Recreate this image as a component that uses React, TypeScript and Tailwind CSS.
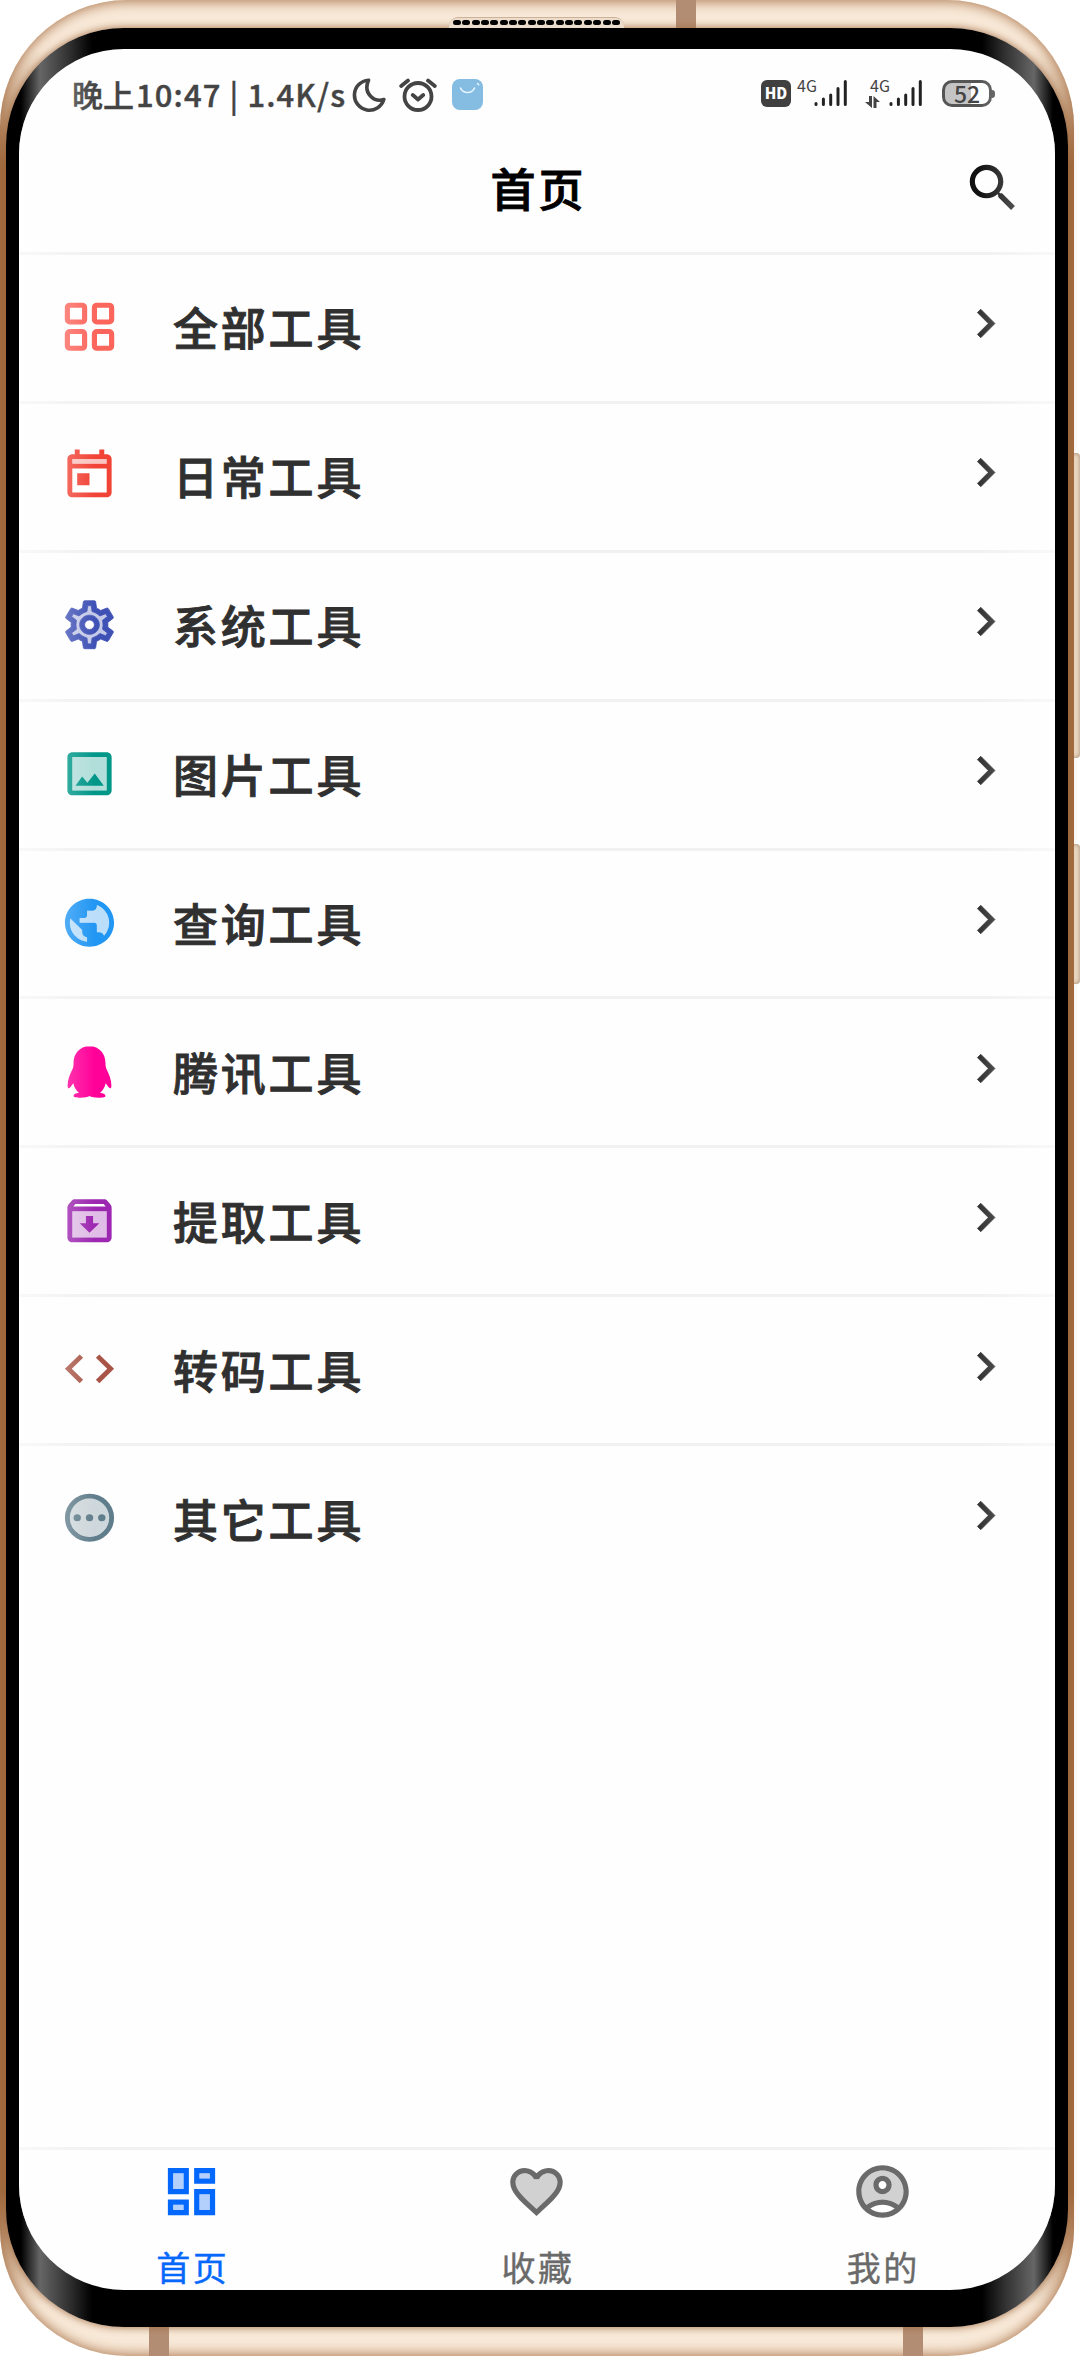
import type { ReactNode } from "react";
import clsx from "clsx";

type Tool = {
  label: string;
  color: string;
  icon: ReactNode;
};

const tools: Tool[] = [
  {
    label: "全部工具",
    color: "text-[#fb655c]",
    icon: (
      <g fill="none" stroke="currentColor" strokeWidth="2.1">
        <rect x="3" y="3" width="7" height="7" rx="1" />
        <rect x="14" y="3" width="7" height="7" rx="1" />
        <rect x="3" y="14" width="7" height="7" rx="1" />
        <rect x="14" y="14" width="7" height="7" rx="1" />
      </g>
    ),
  },
  {
    label: "日常工具",
    color: "text-[#f14336]",
    icon: (
      <>
        <path opacity=".3" d="M5 5h14v2H5z" />
        <path d="M19 3h-1V1h-2v2H8V1H6v2H5c-1.1 0-2 .9-2 2v14c0 1.1.9 2 2 2h14c1.1 0 2-.9 2-2V5c0-1.1-.9-2-2-2zm0 16H5V9h14v10zm0-12H5V5h14v2zM7 11h5v5H7z" />
      </>
    ),
  },
  {
    label: "系统工具",
    color: "text-[#3f51b5]",
    icon: (
      <>
        <path
          opacity=".3"
          d="M19.28 8.6l-.7-1.21-1.27.51-1.06.43-.91-.7c-.39-.3-.8-.54-1.23-.71l-1.06-.43-.16-1.13L12.7 4h-1.4l-.19 1.35-.16 1.13-1.06.44c-.41.17-.82.41-1.25.73l-.9.68-1.05-.42-1.27-.52-.7 1.21 1.08.84.89.7-.14 1.13c-.03.3-.05.53-.05.73s.02.43.05.73l.14 1.13-.89.7-1.08.84.7 1.21 1.27-.51 1.06-.43.91.7c.39.3.8.54 1.23.71l1.06.43.16 1.13.19 1.36h1.39l.19-1.35.16-1.13 1.06-.43c.41-.17.82-.41 1.25-.73l.9-.68 1.04.42 1.27.51.7-1.21-1.08-.84-.89-.7.14-1.13c.04-.31.05-.52.05-.73 0-.21-.02-.43-.05-.73l-.14-1.13.89-.7 1.1-.84zM12 16c-2.21 0-4-1.79-4-4s1.79-4 4-4 4 1.79 4 4-1.79 4-4 4z"
        />
        <path
          stroke="currentColor"
          strokeWidth=".35"
          d="M19.43 12.98c.04-.32.07-.64.07-.98s-.03-.66-.07-.98l2.11-1.65c.19-.15.24-.42.12-.64l-2-3.46c-.09-.16-.26-.25-.44-.25-.06 0-.12.01-.17.03l-2.49 1c-.52-.4-1.08-.73-1.69-.98l-.38-2.65C14.46 2.18 14.25 2 14 2h-4c-.25 0-.46.18-.49.42l-.38 2.65c-.61.25-1.17.59-1.69.98l-2.49-1c-.06-.02-.12-.03-.18-.03-.17 0-.34.09-.43.25l-2 3.46c-.13.22-.07.49.12.64l2.11 1.65c-.04.32-.07.65-.07.98s.03.66.07.98l-2.11 1.65c-.19.15-.24.42-.12.64l2 3.46c.09.16.26.25.44.25.06 0 .12-.01.17-.03l2.49-1c.52.4 1.08.73 1.69.98l.38 2.65c.03.24.24.42.49.42h4c.25 0 .46-.18.49-.42l.38-2.65c.61-.25 1.17-.59 1.69-.98l2.49 1c.06.02.12.03.18.03.17 0 .34-.09.43-.25l2-3.46c.12-.22.07-.49-.12-.64l-2.11-1.65zm-1.98-1.71c.04.31.05.52.05.73 0 .21-.02.43-.05.73l-.14 1.13.89.7 1.08.84-.7 1.21-1.27-.51-1.04-.42-.9.68c-.43.32-.84.56-1.25.73l-1.06.43-.16 1.13-.2 1.35h-1.4l-.19-1.35-.16-1.13-1.06-.43c-.43-.18-.83-.41-1.23-.71l-.91-.7-1.06.43-1.27.51-.7-1.21 1.08-.84.89-.7-.14-1.13c-.03-.31-.05-.54-.05-.74s.02-.43.05-.73l.14-1.13-.89-.7-1.08-.84.7-1.21 1.27.51 1.04.42.9-.68c.43-.32.84-.56 1.25-.73l1.06-.43.16-1.13.2-1.35h1.39l.19 1.35.16 1.13 1.06.43c.43.18.83.41 1.23.71l.91.7 1.06-.43 1.27-.51.7 1.21-1.07.85-.89.7.14 1.13zM12 8c-2.21 0-4 1.79-4 4s1.79 4 4 4 4-1.79 4-4-1.79-4-4-4zm0 6c-1.1 0-2-.9-2-2s.9-2 2-2 2 .9 2 2-.9 2-2 2z"
        />
      </>
    ),
  },
  {
    label: "图片工具",
    color: "text-[#009688]",
    icon: (
      <>
        <path opacity=".3" d="M5 5h14v14H5z" />
        <path d="M19 3H5c-1.1 0-2 .9-2 2v14c0 1.1.9 2 2 2h14c1.1 0 2-.9 2-2V5c0-1.1-.9-2-2-2zm0 16H5V5h14v14zM14.14 11.86l-3 3.87L9 13.14 6.3 17h11.5z" />
      </>
    ),
  },
  {
    label: "查询工具",
    color: "text-[#2196f3]",
    icon: (
      <>
        <path
          opacity=".3"
          d="M14.99 4.59V5c0 1.1-.9 2-2 2h-2v2c0 .55-.45 1-1 1h-2v2h6c.55 0 1 .45 1 1v3h1c.89 0 1.64.59 1.9 1.4C19.19 15.98 20 14.08 20 12c0-3.35-2.08-6.23-5.01-7.41zM8.99 16v-1l-4.78-4.78C4.08 10.79 4 11.39 4 12c0 4.07 3.06 7.43 6.99 7.93V18c-1.1 0-2-.9-2-2z"
        />
        <path d="M12 2C6.48 2 2 6.48 2 12s4.48 10 10 10 10-4.48 10-10S17.52 2 12 2zm-1 17.93c-3.95-.49-7-3.85-7-7.93 0-.62.08-1.22.21-1.79L9 15v1c0 1.1.9 2 2 2v1.93zm6.9-2.54c-.26-.81-1-1.39-1.9-1.39h-1v-3c0-.55-.45-1-1-1H8v-2h2c.55 0 1-.45 1-1V7h2c1.1 0 2-.9 2-2v-.41C17.93 5.77 20 8.65 20 12c0 2.08-.81 3.98-2.1 5.39z" />
      </>
    ),
  },
  {
    label: "腾讯工具",
    color: "text-[#ff0099]",
    icon: (
      <path d="M12 1.4c-4.1 0-6.5 3.2-6.5 7 0 1-.1 1.9-.5 2.7-1.1 2.3-1.9 4.500-1.9 6.600 0 .9.2 1.300.5 1.200.4-.1 1.100-1 1.800-2.100.4 1.700 1.200 3 2.300 4-1.200.2-2.200.6-2.200 1.300 0 .5.9.7 2.900.7 1.600 0 2.900-.2 3.600-.7.700.5 2 .7 3.600.7 2 0 2.900-.2 2.900-.7 0-.7-1-1.100-2.200-1.300 1.100-1 1.900-2.300 2.300-4 .7 1.100 1.400 2 1.800 2.100.3.100.5-.3.500-1.200 0-2.100-.8-4.300-1.900-6.600-.4-.8-.5-1.700-.5-2.700 0-3.800-2.400-7-6.500-7z" />
    ),
  },
  {
    label: "提取工具",
    color: "text-[#9c27b0]",
    icon: (
      <>
        <path opacity=".3" d="M5 8h14v11H5z" />
        <path d="M20.54 5.23l-1.39-1.68C18.88 3.21 18.47 3 18 3H6c-.47 0-.88.21-1.16.55L3.46 5.23C3.17 5.57 3 6.02 3 6.5V19c0 1.1.9 2 2 2h14c1.1 0 2-.9 2-2V6.5c0-.48-.17-.93-.46-1.27zM6.24 5h11.52l.83 1H5.42l.82-1zM5 19V8h14v11H5zm8.45-9h-2.9v3H8l4 4 4-4h-2.55z" />
      </>
    ),
  },
  {
    label: "转码工具",
    color: "text-[#a85547]",
    icon: (
      <path d="M9.4 16.6L4.8 12l4.6-4.6L8 6l-6 6 6 6 1.4-1.4zm5.2 0l4.6-4.6-4.6-4.6L16 6l6 6-6 6-1.4-1.4z" />
    ),
  },
  {
    label: "其它工具",
    color: "text-[#607d8b]",
    icon: (
      <>
        <circle cx="12" cy="12" r="8" opacity=".3" />
        <circle cx="12" cy="12" r="9" fill="none" stroke="currentColor" strokeWidth="2" />
        <circle cx="7" cy="12" r="1.5" />
        <circle cx="12" cy="12" r="1.5" />
        <circle cx="17" cy="12" r="1.5" />
      </>
    ),
  },
];

const tabs = [
  {
    label: "首页",
    active: true,
    icon: (
      <>
        <path opacity=".3" d="M5 5h4v6H5zM15 13h4v6h-4zM5 17h4v2H5zM15 5h4v2h-4z" />
        <path d="M3 13h8V3H3v10zm2-8h4v6H5V5zm8 16h8V11h-8v10zm2-8h4v6h-4v-6zM13 3v6h8V3h-8zm6 4h-4V5h4v2zM3 21h8v-6H3v6zm2-4h4v2H5v-2z" />
      </>
    ),
  },
  {
    label: "收藏",
    active: false,
    icon: (
      <>
        <path
          opacity=".3"
          d="M16.5 5c-1.54 0-3.04.99-3.56 2.36h-1.87C10.54 5.99 9.04 5 7.5 5 5.5 5 4 6.5 4 8.5c0 2.89 3.14 5.74 7.9 10.05l.1.1.1-.1C16.86 14.24 20 11.39 20 8.5c0-2-1.5-3.5-3.5-3.5z"
        />
        <path d="M16.5 3c-1.74 0-3.41.81-4.5 2.09C10.91 3.81 9.24 3 7.5 3 4.42 3 2 5.42 2 8.5c0 3.78 3.4 6.86 8.55 11.54L12 21.35l1.45-1.32C18.6 15.36 22 12.28 22 8.5 22 5.42 19.58 3 16.5 3zm-4.4 15.55l-.1.1-.1-.1C7.14 14.24 4 11.39 4 8.5 4 6.5 5.5 5 7.5 5c1.54 0 3.04.99 3.57 2.36h1.87C13.46 5.99 14.96 5 16.5 5c2 0 3.5 1.5 3.5 3.5 0 2.89-3.14 5.74-7.9 10.05z" />
      </>
    ),
  },
  {
    label: "我的",
    active: false,
    icon: (
      <>
        <path
          opacity=".3"
          d="M12 4c-4.42 0-8 3.58-8 8 0 1.95.7 3.73 1.86 5.12C7.55 15.8 9.68 15 12 15s4.45.8 6.14 2.12C19.3 15.73 20 13.95 20 12c0-4.42-3.58-8-8-8zm0 9c-1.93 0-3.5-1.57-3.5-3.5S10.07 6 12 6s3.5 1.57 3.5 3.5S13.93 13 12 13z"
        />
        <path d="M12 2C6.48 2 2 6.48 2 12s4.48 10 10 10 10-4.48 10-10S17.52 2 12 2zM7.35 18.5C8.66 17.56 10.26 17 12 17s3.34.56 4.65 1.5C15.34 19.44 13.74 20 12 20s-3.34-.56-4.65-1.5zm10.79-1.38C16.45 15.8 14.32 15 12 15s-4.45.8-6.14 2.12C4.7 15.73 4 13.95 4 12c0-4.42 3.58-8 8-8s8 3.58 8 8c0 1.95-.7 3.73-1.86 5.12zM12 6c-1.93 0-3.5 1.57-3.5 3.5S10.07 13 12 13s3.5-1.57 3.5-3.5S13.93 6 12 6zm0 5c-.83 0-1.5-.67-1.5-1.5S11.17 8 12 8s1.5.67 1.5 1.5S12.83 11 12 11z" />
      </>
    ),
  },
];

function Signal() {
  return (
    <svg viewBox="0 0 34 28" className="h-7 w-[34px]" stroke="#222" strokeWidth="3" strokeLinecap="round">
      <path d="M2 24.5v1M9.4 20v5.5M16.7 16v9.5M24 9.5v16M31.3 2.5v23" />
    </svg>
  );
}

function StatusBar() {
  return (
    <div className="flex h-[91px] items-center pr-[60px] pl-[53px] text-[#444]">
      <div className="mb-[3px] flex w-[280px] text-[31px] leading-none font-medium whitespace-nowrap [-webkit-text-stroke:0.4px]">
        <span>晚上</span>
        <span className="ml-[2px] tracking-[1.1px]">10:47 | 1.4K/s</span>
      </div>
      <svg viewBox="0 0 34 34" className="h-[34px] w-[34px]" fill="none" stroke="currentColor" strokeWidth="3.6" strokeLinejoin="round">
        <path d="M16.5 2.2A15 15 0 1 0 31.8 21.5C23 24.5 10.5 16 16.5 2.2z" />
      </svg>
      <svg viewBox="0 0 38 34" className="ml-[13px] h-[34px] w-[38px]" fill="none" stroke="currentColor" strokeWidth="3.8" strokeLinecap="round" strokeLinejoin="round">
        <circle cx="19" cy="18.5" r="13.5" />
        <path d="M13.800 17l5.200 4.500 5.200-4.500M2.200 8l6.800-5.400M35.800 8L29 2.600" />
      </svg>
      <svg viewBox="0 0 31 31" className="ml-[15px] h-[31px] w-[31px]" fill="none">
        <rect width="31" height="31" rx="8" fill="#84bce2" />
        <path d="M8.500 9c2.500 6 11.500 6 14 0M25.500 4.500l1.200 1.200" stroke="#e9f5fc" strokeWidth="1.6" strokeLinecap="round" />
      </svg>

      <div className="mb-[2px] ml-auto flex items-center">
        <div className="flex h-[27px] w-[30px] items-center justify-center rounded-[6px] bg-[#404040] text-[15px] font-black text-white">
          HD
        </div>
        <div className="flex h-[30px] items-start">
          <span className="ml-[6px] w-[17px] text-[16px] leading-[13px]">4G</span>
          <Signal />
        </div>
        <div className="ml-[17px] flex h-[30px] items-start">
          <div className="flex w-[24px] flex-col">
            <span className="pl-[5px] text-[16px] leading-[13px]">4G</span>
            <svg viewBox="0 0 15 12" className="mt-[4px] h-[12px] w-[15px]" fill="currentColor">
              <path d="M4 0h3v12L0 6h4zM8.500 12h3V6H15L8.500 0z" />
            </svg>
          </div>
          <Signal />
        </div>
        <div className="ml-[19px] flex items-center">
          <div className="flex h-[27px] w-[50px] items-center justify-center rounded-[10px] border-[3px] border-[#555] bg-linear-to-r from-[#c4c4c4] from-58% to-white to-58% pb-[1px] text-[23px] leading-none font-medium">
            52
          </div>
          <div className="h-[8px] w-[3px] rounded-r-full bg-[#555]" />
        </div>
      </div>
    </div>
  );
}

function ToolRow({ tool, last }: { tool: Tool; last: boolean }) {
  return (
    <li
      className={clsx(
        "flex h-[148.9px] items-center border-b-[3px] pr-[41px] pl-[41px]",
        last ? "border-transparent" : "border-[#f1f1f1]",
      )}
    >
      <svg
        viewBox="0 0 24 24"
        preserveAspectRatio="none"
        fill="currentColor"
        className={clsx("mb-[2px] h-[57.5px] w-[59px]", tool.color)}
      >
        {tool.icon}
      </svg>
      <span className="mb-[2px] ml-[54px] text-[45px] leading-none font-medium tracking-[2.8px] text-[#303030] [-webkit-text-stroke:0.9px]">
        {tool.label}
      </span>
      <svg viewBox="0 0 24 24" fill="#333" stroke="#333" strokeWidth=".3" className="mb-[8px] ml-auto h-[57px] w-[57px]">
        <path d="M8.590 16.590L13.170 12 8.590 7.410 10 6l6 6-6 6z" />
      </svg>
    </li>
  );
}

function Screen() {
  return (
    <div className="relative flex h-full flex-col overflow-hidden rounded-[105px] bg-[#fefefe]">
      <StatusBar />
      <header className="flex h-[115px] items-center justify-between border-b-[3px] border-[#f1f1f1] pr-[31px] pb-[17px] pl-[34px]">
        <div className="w-[62px]" />
        <h1 className="text-[45px] leading-none font-medium tracking-[3px] text-black [-webkit-text-stroke:0.9px]">
          首页
        </h1>
        <svg viewBox="0 0 24 24" fill="#111" className="h-[62px] w-[62px]">
          <path d="M15.500 14h-.79l-.28-.27C15.410 12.590 16 11.110 16 9.500 16 5.910 13.090 3 9.500 3S3 5.910 3 9.500 5.910 16 9.500 16c1.610 0 3.090-.59 4.230-1.570l.27.28v.79l5 4.990L20.490 19l-4.990-5zm-6 0C7.010 14 5 11.990 5 9.500S7.010 5 9.500 5 14 7.010 14 9.500 11.990 14 9.500 14z" />
        </svg>
      </header>

      <ul className="flex-1">
        {tools.map((tool, i) => (
          <ToolRow key={tool.label} tool={tool} last={i === tools.length - 1} />
        ))}
      </ul>

      <nav className="grid h-[143px] grid-cols-3 border-t-[3px] border-[#f1f1f1]">
        {tabs.map((tab) => (
          <div
            key={tab.label}
            className={clsx(
              "flex flex-col items-center pt-[10px]",
              tab.active ? "text-[#0568fd]" : "text-[#6a6a6a]",
            )}
          >
            <svg viewBox="0 0 24 24" fill="currentColor" className="h-[63px] w-[63px]">
              {tab.icon}
            </svg>
            <span className="mt-[19px] pl-[2px] text-[34px] leading-[50px] tracking-[2.5px] [-webkit-text-stroke:0.4px]">
              {tab.label}
            </span>
          </div>
        ))}
      </nav>

      {/* glass reflection on both curved edges */}
      <div className="pointer-events-none absolute inset-y-0 left-0 w-[76px] bg-linear-to-r from-white/55 to-white/0" />
      <div className="pointer-events-none absolute inset-y-0 right-0 w-[76px] bg-linear-to-l from-white/55 to-white/0" />
    </div>
  );
}

export default function App() {
  return (
    <div className="relative flex h-[2356px] w-[1080px] overflow-hidden bg-white font-['Noto_Sans_CJK_SC',sans-serif]">
      {/* volume and power keys */}
      <div className="absolute top-[453px] left-[1068px] h-[305px] w-[12px] rounded-[4px] bg-[#ecdac6] shadow-[inset_0_0_4px_#a08468]" />
      <div className="absolute top-[844px] left-[1068px] h-[140px] w-[12px] rounded-[4px] bg-[#ecdac6] shadow-[inset_0_0_4px_#a08468]" />

      <div className="relative w-[1074px] rounded-[127px] px-[6px] pt-[28px] pb-[29px]">
        <div className="absolute inset-0 rounded-[127px] bg-[linear-gradient(to_bottom,#f8e9d8_50px,#9a6538_165px,#9a6538_calc(100%-165px),#f8e9d8_calc(100%-50px))] shadow-[inset_0_0_13px_1px_#a87248]" />
        {/* antenna bands */}
        <div className="absolute top-0 left-[676px] h-[28px] w-[20px] bg-[#b38d73]" />
        <div className="absolute bottom-0 left-[149px] h-[29px] w-[20px] bg-[#b38d73]" />
        <div className="absolute bottom-0 left-[903px] h-[29px] w-[20px] bg-[#b38d73]" />

        <div className="relative h-full rounded-[118px] bg-[linear-gradient(to_right,#000_15px,#666_34px,#333_62px,#000_86px,#000_calc(100%-86px),#333_calc(100%-62px),#666_calc(100%-34px),#000_calc(100%-15px))] px-[13px] pt-[21px] pb-[37px] shadow-[0_0_9px_0_#a06a40]">
          {/* earpiece grille */}
          <div className="absolute -top-[11px] left-[443px] flex h-[11px] w-[175px] justify-between rounded-t-[9px] border-t border-[#cdb198] bg-[#ecdccb] px-[4px] pt-[2px]">
            {Array.from({ length: 18 }, (_, i) => (
              <span key={i} className="h-[5px] w-[8px] rounded-full bg-black" />
            ))}
          </div>
          <Screen />
        </div>
      </div>
    </div>
  );
}
